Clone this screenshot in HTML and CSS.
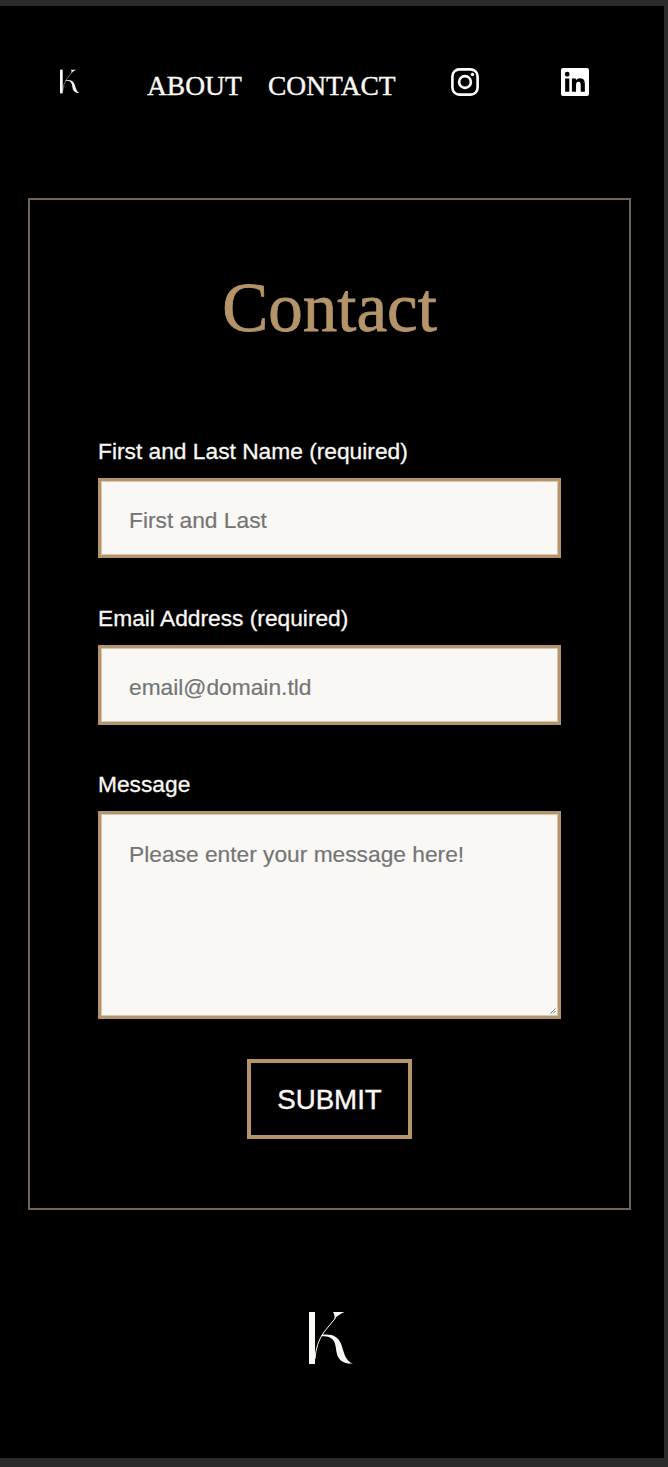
FILE: index.html
```html
<!DOCTYPE html>
<html lang="en">
<head>
<meta charset="utf-8">
<title>Contact</title>
<link rel="stylesheet" href="styles.css">
</head>
<body>
<div class="page">
  <header class="nav">
    <a class="nav-logo" href="#"><svg class="mark" viewBox="0 0 44 52"><path d="M0 0h6v52H0z"/><path d="M24 0h11.500Q29 2.500 25 7.500Q26.500 4 24 0zM12.500 23C22 21.500 29.500 24 32.500 33C35 41 37 50 44 51.500C35 52 29 49 27.500 40C26.500 30 25 24 12.500 24.300z"/><path class="hair" d="M26.500 6L15 20Q7 31 6 47"/></svg></a>
    <a class="nav-link" href="#">ABOUT</a>
    <a class="nav-link contact-link" href="#">CONTACT</a>
    <a class="instagram" href="#"><svg viewBox="0 0 28 28"><rect class="ring" x="1.400" y="1.400" width="25.200" height="25.200" rx="7"/><circle class="ring" cx="14" cy="14" r="5.900"/><circle cx="21.500" cy="6.500" r="1.700"/></svg></a>
    <a class="linkedin" href="#"><svg viewBox="0 0 24 24"><path d="M20.447 20.452h-3.554v-5.569c0-1.328-.027-3.037-1.852-3.037-1.853 0-2.136 1.445-2.136 2.939v5.667H9.351V9h3.414v1.561h.046c.477-.9 1.637-1.850 3.370-1.850 3.601 0 4.267 2.370 4.267 5.455v6.286zM5.337 7.433a2.062 2.062 0 1 1 0-4.125 2.062 2.062 0 0 1 0 4.125zM7.119 20.452H3.555V9h3.564v11.452zM22.225 0H1.771C.792 0 0 .774 0 1.729v20.542C0 23.227.792 24 1.771 24h20.451C23.200 24 24 23.227 24 22.271V1.729C24 .774 23.200 0 22.222 0z"/></svg></a>
  </header>
  <main class="card">
    <h1>Contact</h1>
    <form>
      <label for="name">First and Last Name (required)</label>
      <input id="name" type="text" placeholder="First and Last">
      <label for="email">Email Address (required)</label>
      <input id="email" type="email" placeholder="email@domain.tld">
      <label for="message">Message</label>
      <div class="message">
        <textarea id="message" placeholder="Please enter your message here!"></textarea>
        <svg class="grip" viewBox="0 0 6 6"><path d="M.5 5.500L5.500.5M3 5.500L5.500 3"/></svg>
      </div>
      <button type="button">SUBMIT</button>
    </form>
  </main>
  <footer><svg class="mark" viewBox="0 0 44 52"><path d="M0 0h6v52H0z"/><path d="M24 0h11.500Q29 2.500 25 7.500Q26.500 4 24 0zM12.500 23C22 21.500 29.500 24 32.500 33C35 41 37 50 44 51.500C35 52 29 49 27.500 40C26.500 30 25 24 12.500 24.300z"/><path class="hair" d="M26.500 6L15 20Q7 31 6 47"/></svg></footer>
</div>
</body>
</html>
```
FILE: styles.css
```css
* { box-sizing: border-box; }
body { margin: 0; height: 1467px; background: #2b2b2b; padding: 6px 4px 9px 0; }
.page { height: 1452px; background: #000; overflow: hidden; }
svg { display: block; fill: #faf8f5; }
.nav { display: flex; height: 192px; padding: 62px 0 0 60px; align-items: flex-start; }
.nav-logo { width: 87px; padding-top: 1px; }
.nav-logo .mark { width: 20px; height: 25px; }
.nav-link { width: 121px; padding-top: 1px; color: #faf8f5; font: 27.500px/34px "Liberation Serif", serif; text-decoration: none; -webkit-text-stroke: .4px #faf8f5; }
.contact-link { width: 183px; }
.instagram { width: 110px; }
.instagram svg, .linkedin svg { width: 28px; height: 28px; fill: #fff; }
.instagram .ring { fill: none; stroke: #fff; stroke-width: 2.600; }
.hair { fill: none; stroke: #faf8f5; stroke-width: 1; }
.card { width: 603px; height: 1012px; margin-left: 28px; border: 2px solid #706459; padding: 66px 68px 0; }
h1 { margin: 0 0 87px; padding-top: 1px; font: 400 69px/82px "Liberation Serif", serif; color: #b49468; text-align: center; -webkit-text-stroke: .8px #b49468; }
form { display: flex; flex-direction: column; }
label { height: 42px; font: 22.750px/30px "Liberation Sans", sans-serif; color: #faf8f5; -webkit-text-stroke: .3px #faf8f5; }
input, textarea { display: block; width: 463px; border: 3px solid #b49468; border-radius: 0; outline: 0; background: #faf8f5; padding: 5px 28px 0; font: 22.750px/30px "Liberation Sans", sans-serif; box-shadow: inset 0 0 0 1px #d8c8af; }
input { height: 80px; margin-bottom: 45px; }
input#email { margin-bottom: 44px; }
textarea { height: 208px; padding-top: 25px; resize: none; }
::placeholder { color: #757575; opacity: 1; -webkit-text-stroke: .2px #757575; }
.message { position: relative; }
.grip { position: absolute; right: 5px; bottom: 5px; width: 6px; height: 6px; stroke: #555; stroke-width: .8; }
button { align-self: center; width: 165px; height: 80px; margin-top: 40px; padding: 2px 0 0; border: 4px solid #b49468; background: #000; color: #faf8f5; font: 27.700px/34px "Liberation Sans", sans-serif; -webkit-text-stroke: .4px #faf8f5; }
footer { padding: 102px 0 0 309px; }
footer .mark { width: 44px; height: 52px; }
```
